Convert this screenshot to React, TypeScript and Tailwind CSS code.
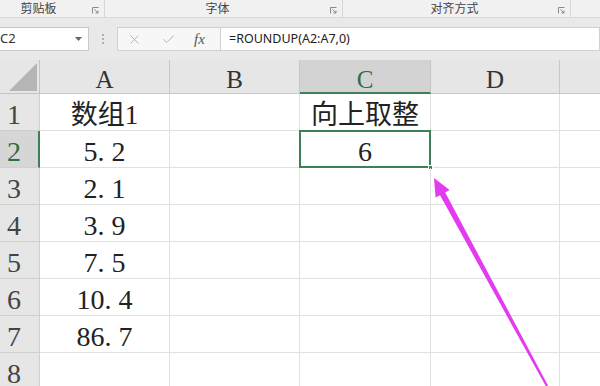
import React from 'react';
import { X, Check } from 'lucide-react';

// column E lies past the window's right edge, so its letter is not shown
const columns = ['A', 'B', 'C', 'D', ''];

// row data: [A, C]
const rows: { a: string; c: string }[] = [
  { a: '数组1', c: '向上取整' },
  { a: '5.2', c: '6' },
  { a: '2.1', c: '' },
  { a: '3.9', c: '' },
  { a: '7.5', c: '' },
  { a: '10.4', c: '' },
  { a: '86.7', c: '' },
  { a: '', c: '' },
];

const Launcher = () => (
  <svg width="7" height="7" viewBox="0 0 7 7" className="text-[#8a8a8a]">
    <path d="M0.5 0.5 H6.5 M0.5 0.5 V6.5" stroke="currentColor" strokeWidth="1" fill="none" />
    <path d="M2.5 2.5 L6 6 M6 3.5 V6 H3.5" stroke="currentColor" strokeWidth="1" fill="none" />
  </svg>
);

const RibbonGroup = ({ label, className }: { label: string; className: string }) => (
  <div className={`relative flex items-center justify-center border-r border-[#d6d6d6] ${className}`}>
    <span>{label}</span>
    <span className="absolute right-[5px] top-[7px]">
      <Launcher />
    </span>
  </div>
);

// numbers look like "5. 2" in the original (SimSun period)
const Value = ({ text }: { text: string }) => {
  if (/^\d+\.\d+$/.test(text)) {
    const [i, f] = text.split('.');
    return (
      <span className="text-[28px]">
        {i}.<span className="pl-[7px]">{f}</span>
      </span>
    );
  }
  if (/^\d+$/.test(text)) return <span className="text-[28px]">{text}</span>;
  return <span className="text-[27px]">{text}</span>;
};

export default function App() {
  return (
    <div className="relative w-[600px] h-[386px] overflow-hidden bg-white flex flex-col font-['Noto_Sans','Noto_Sans_CJK_SC',sans-serif]">
      {/* ribbon group labels */}
      <div className="flex h-[18px] shrink-0 bg-[#f1f1f1] border-b border-[#dadada] text-[12px] leading-none text-[#444]">
        <RibbonGroup label="剪贴板" className="w-[132px] ml-[-27px] shrink-0" />
        <RibbonGroup label="字体" className="w-[238px] pr-[12px] shrink-0" />
        <RibbonGroup label="对齐方式" className="w-[228px] pr-[4px] shrink-0" />
        <div className="flex-1" />
      </div>

      {/* formula bar */}
      <div className="flex h-[42px] shrink-0 items-start pt-[9px] bg-[#e9e9e9]">
        <div className="flex items-center w-[89px] h-[24px] bg-white border border-l-0 border-[#c9c9c9] text-[13px] text-[#333]">
          <span>C2</span>
          <svg width="7" height="4" viewBox="0 0 7 4" className="ml-auto mr-[6px]">
            <path d="M0 0 H7 L3.5 4 Z" fill="#666" />
          </svg>
        </div>
        <div className="w-[28px] h-[24px] flex flex-col items-center justify-center gap-[2px]">
          <span className="w-[2px] h-[2px] bg-[#b0b0b0]" />
          <span className="w-[2px] h-[2px] bg-[#b0b0b0]" />
          <span className="w-[2px] h-[2px] bg-[#b0b0b0]" />
        </div>
        <div className="flex items-center w-[104px] h-[24px] bg-[#f7f7f7] border border-[#d0d0d0] text-[#a8a8a8]">
          <X size={15} strokeWidth={1.3} className="ml-[9px]" />
          <Check size={15} strokeWidth={1.3} className="ml-[19px]" />
          <span className="ml-[18px] text-[15px] italic text-[#555] font-['Liberation_Serif',serif]">
            fx
          </span>
        </div>
        <div className="flex-1 h-[24px] flex items-center pl-[8px] bg-white border border-l-0 border-[#d0d0d0] text-[12.5px] text-[#222]">
          =ROUNDUP(A2:A7,0)
        </div>
      </div>

      {/* sheet grid: wider than the window, column E runs off the right edge */}
      <div className="w-[690px] grid grid-cols-[40px_130px_130px_131px_129px_130px] grid-rows-[34px_repeat(8,37px)] font-['Liberation_Serif','Noto_Sans_CJK_SC',serif] text-[#222]">
        <div className="relative bg-[#e6e6e6] border-r border-b border-[#c4c4c4] flex items-end justify-end pr-[2px] pb-[2px]">
          <svg width="28" height="28" viewBox="0 0 28 28">
            <polygon points="0,28 28,28 28,0" fill="#b5b5b5" />
          </svg>
        </div>
        {columns.map((col, ci) =>
          col === 'C' ? (
            <div
              key={ci}
              className="flex items-center justify-center pt-[7px] bg-[#d3d3d3] border-r border-[#c4c4c4] border-b-2 border-b-[#3f7f58] text-[25px] text-[#2f6e45]"
            >
              {col}
            </div>
          ) : (
            <div
              key={ci}
              className="flex items-center justify-center pt-[7px] bg-[#e6e6e6] border-r border-b border-[#c8c8c8] text-[25px] text-[#333]"
            >
              {col}
            </div>
          )
        )}

        {rows.map((row, i) => {
          const n = i + 1;
          const sel = n === 2;
          return (
            <React.Fragment key={n}>
              <div
                className={
                  sel
                    ? 'flex items-center pl-[7px] pt-[6px] bg-[#d6d6d6] border-b border-[#cfcfcf] border-r-2 border-r-[#3f7f58] text-[28px] text-[#2f6e45]'
                    : 'flex items-center pl-[7px] pt-[6px] bg-[#e6e6e6] border-b border-r border-[#cfcfcf] text-[28px] text-[#444]'
                }
              >
                {n}
              </div>
              <div className="flex items-center justify-center pt-[6px] border-r border-b border-[#e1e1e1]">
                {row.a && <Value text={row.a} />}
              </div>
              <div className="border-r border-b border-[#e1e1e1]" />
              <div className="relative flex items-center justify-center pt-[6px] border-r border-b border-[#e1e1e1]">
                {row.c && <Value text={row.c} />}
                {sel && (
                  <div className="absolute inset-[-1px] border-2 border-[#3f7f58]">
                    <span className="absolute right-[-4px] bottom-[-4px] w-[5px] h-[5px] bg-[#3f7f58] border border-white" />
                  </div>
                )}
              </div>
              <div className="border-r border-b border-[#e1e1e1]" />
              <div className="border-r border-b border-[#e1e1e1]" />
            </React.Fragment>
          );
        })}
      </div>

      {/* annotation arrow */}
      <svg className="absolute inset-0 pointer-events-none" width="600" height="386" viewBox="0 0 600 386">
        <polygon
          points="434,178 449.6,190 445.2,192.4 548,385.5 546,386.5 440,195.2 435.6,197.6"
          fill="#e33cf0"
        />
      </svg>
    </div>
  );
}
